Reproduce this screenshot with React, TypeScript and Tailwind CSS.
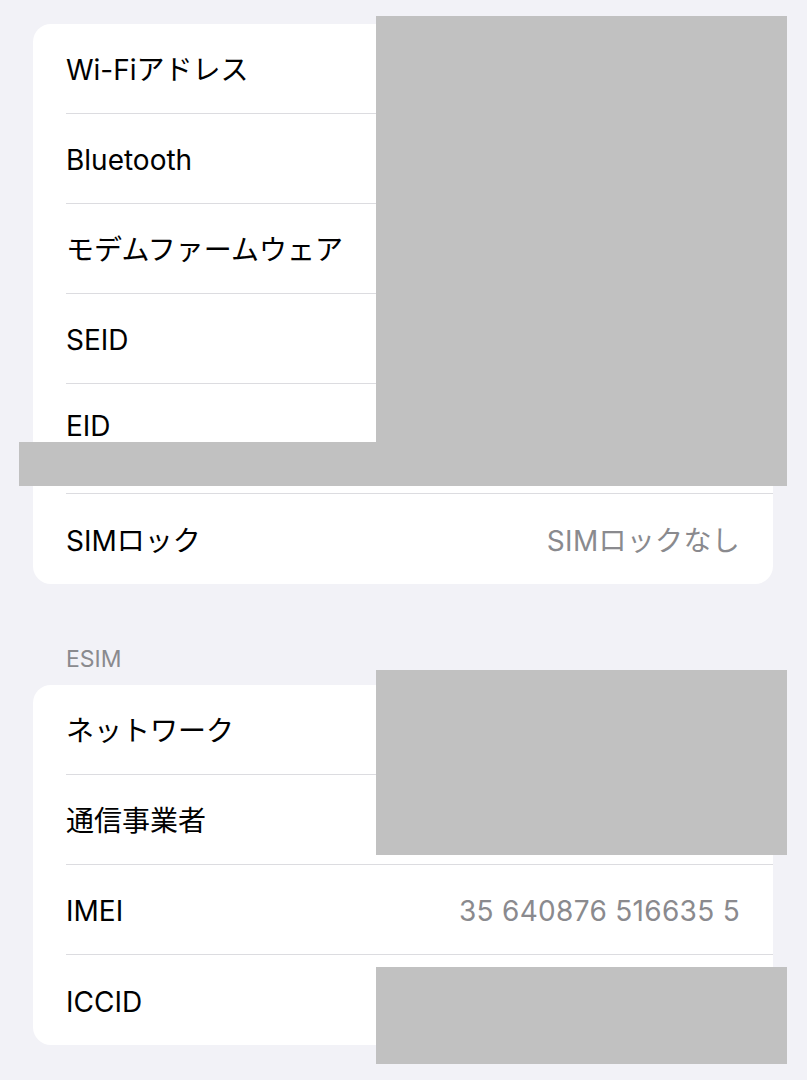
const font = { fontFamily: '"Inter", "Noto Sans CJK JP", sans-serif' };

type Row = { label: string; value?: string; tall?: boolean; last?: boolean };

const deviceRows: Row[] = [
  { label: 'Wi-Fiアドレス' },
  { label: 'Bluetooth' },
  { label: 'モデムファームウェア' },
  { label: 'SEID' },
  { label: 'EID', tall: true },
  { label: 'SIMロック', value: 'SIMロックなし', last: true },
];

const esimRows: Row[] = [
  { label: 'ネットワーク' },
  { label: '通信事業者' },
  { label: 'IMEI', value: '35 640876 516635 5' },
  { label: 'ICCID', last: true },
];

function SettingsRow({ row }: { row: Row }) {
  return (
    <div className={row.tall ? 'h-[110px] pl-[33px]' : 'h-[90px] pl-[33px]'}>
      <div
        className={
          'h-full flex justify-between pr-[33px] ' +
          (row.tall ? 'items-start pt-[25px] ' : 'items-center pt-[3px] ') +
          (row.last ? '' : 'border-b border-[#dcdce0]')
        }
      >
        <span className="text-[28px] leading-[34px] text-black">{row.label}</span>
        {row.value && (
          <span className="text-[28px] leading-[34px] tracking-[0.3px] text-[#8a8a8e]">{row.value}</span>
        )}
      </div>
    </div>
  );
}

export default function App() {
  return (
    <div className="relative w-[807px] h-[1080px] overflow-hidden bg-[#f2f2f7] px-[33px] pt-[24px]" style={font}>
      <div className="w-[740px] rounded-[18px] bg-white overflow-hidden">
        {deviceRows.map((r) => (
          <SettingsRow key={r.label} row={r} />
        ))}
      </div>

      <div className="mt-[60px] mb-[13px] pl-[33px] h-[28px] text-[23px] leading-[30px] text-[#8a8a8e]">ESIM</div>

      <div className="w-[740px] rounded-[18px] bg-white overflow-hidden">
        {esimRows.map((r) => (
          <SettingsRow key={r.label} row={r} />
        ))}
      </div>

      {/* redaction boxes */}
      <div className="absolute left-[376px] top-[16px] w-[411px] h-[470px] bg-[#c1c1c1]" />
      <div className="absolute left-[19px] top-[442px] w-[357px] h-[44px] bg-[#c1c1c1]" />
      <div className="absolute left-[376px] top-[670px] w-[411px] h-[185px] bg-[#c1c1c1]" />
      <div className="absolute left-[376px] top-[967px] w-[411px] h-[97px] bg-[#c1c1c1]" />
    </div>
  );
}
